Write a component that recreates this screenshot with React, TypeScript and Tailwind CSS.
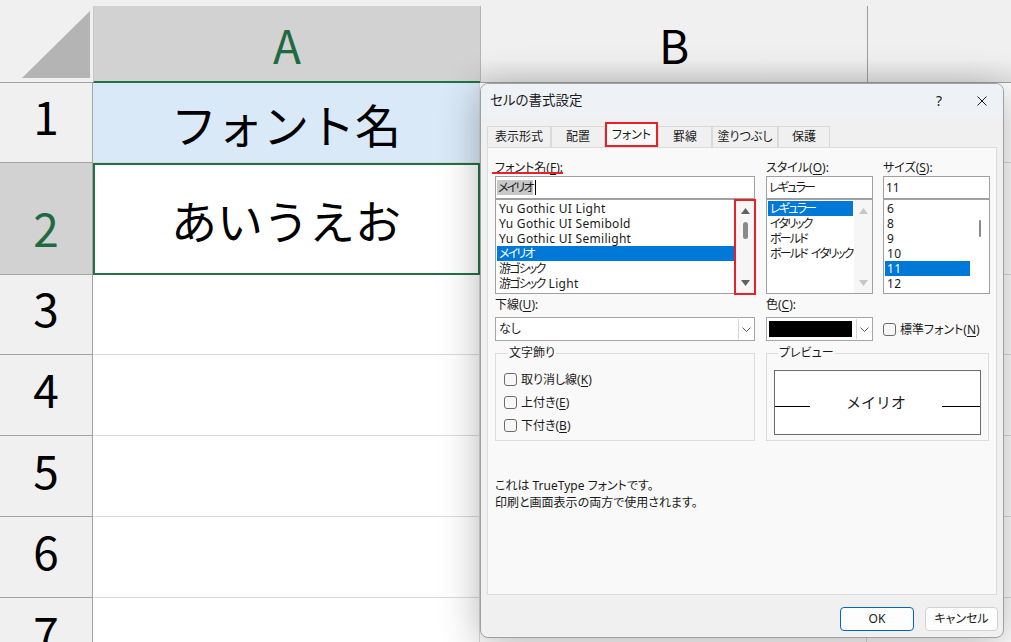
import type { ReactNode } from "react";

const sheetRows = [
  { n: "1", height: "h-[80px]", text: "フォント名", fill: "bg-[#dae9f8]" },
  { n: "2", height: "h-[112px]", text: "あいうえお", selected: true },
  { n: "3", height: "h-[80px]" },
  { n: "4", height: "h-[81px]" },
  { n: "5", height: "h-[81px]" },
  { n: "6", height: "h-[81px]" },
  { n: "7", height: "h-[81px]" },
];

const tabs = [
  { label: "表示形式", width: "w-[64px]" },
  { label: "配置", width: "w-[54px]" },
  { label: "フォント", width: "w-[53px]", active: true },
  { label: "罫線", width: "w-[54px]" },
  { label: "塗りつぶし", width: "w-[66px]" },
  { label: "保護", width: "w-[52px]" },
];

const fontNames = [
  "Yu Gothic UI Light",
  "Yu Gothic UI Semibold",
  "Yu Gothic UI Semilight",
  "メイリオ",
  "游ゴシック",
  "游ゴシック Light",
];
const fontStyles = ["レギュラー", "イタリック", "ボールド", "ボールド イタリック"];
const fontSizes = ["6", "8", "9", "10", "11", "12"];

// Yu Gothic UI has narrow kana: squeeze Japanese words, keep latin ones a touch wide
const hasKana = (text: string) => /[^\x00-\x7F]/.test(text);

function ItemText({ text }: { text: string }) {
  if (!hasKana(text)) return <span className="tracking-[0.3px]">{text}</span>;
  return (
    <span className="inline-flex gap-[4px]">
      {text.split(" ").map((word) => (
        <span key={word} className={hasKana(word) ? "tracking-[-1.8px]" : "tracking-[0.3px]"}>
          {word}
        </span>
      ))}
    </span>
  );
}

function Key({ children }: { children: ReactNode }) {
  return <span className="underline underline-offset-[2px]">{children}</span>;
}

function Label({ children }: { children: ReactNode }) {
  return <div className="h-[17px] whitespace-nowrap leading-[17px]">{children}</div>;
}

function Arrow({ up, color }: { up?: boolean; color: string }) {
  return (
    <svg width="9" height="6" viewBox="0 0 9 6">
      <polygon points={up ? "0,6 4.5,0 9,6" : "0,0 9,0 4.5,6"} fill={color} />
    </svg>
  );
}

function Chevron() {
  return (
    <svg width="9" height="5" viewBox="0 0 9 5">
      <polyline points="0.5,0.5 4.5,4.5 8.5,0.5" fill="none" stroke="#606060" strokeWidth="1" />
    </svg>
  );
}

function ListItems({ items, selected }: { items: string[]; selected: number }) {
  return (
    <div className="min-w-0 flex-1 overflow-hidden px-px pt-px">
      {items.map((item, i) => (
        <div
          key={item}
          className={`h-[15px] whitespace-nowrap pl-[2px] leading-[15px] ${i === selected ? "bg-[#0078d7] text-white" : ""}`}
        >
          <ItemText text={item} />
        </div>
      ))}
    </div>
  );
}

function Checkbox({ children }: { children: ReactNode }) {
  return (
    <div className="flex h-[23px] items-center gap-[4px]">
      <div className="h-[13px] w-[13px] rounded-[3px] border border-[#6b6b6b] bg-[#f7f7f7]" />
      <span className="whitespace-nowrap leading-[17px]">{children}</span>
    </div>
  );
}

function SheetRow({ row }: { row: (typeof sheetRows)[number] }) {
  return (
    <div className={`flex shrink-0 ${row.height}`}>
      <div
        className={`flex w-[93px] shrink-0 items-end justify-center border-b border-r border-[#a3a3a3] pb-[24px] text-[46px] leading-none ${row.selected ? "bg-[#d2d2d2] text-[#1e6b41]" : "bg-[#f0f0f0] text-black"}`}
      >
        {row.n}
      </div>
      <div
        className={`flex w-[387px] shrink-0 items-center justify-center border-b border-r text-[46px] leading-none text-black ${row.fill ?? "bg-white"} ${row.selected ? "border-[#217346] shadow-[inset_2px_2px_0_#217346,inset_-1px_-1px_0_#217346]" : "border-[#dadada]"}`}
      >
        {row.text}
      </div>
      <div className="w-[387px] shrink-0 border-b border-r border-[#dadada] bg-white" />
      <div className="flex-1 border-b border-[#dadada] bg-white" />
    </div>
  );
}

function FormatDialog() {
  return (
    <div className="absolute left-[480px] top-[83px] flex h-[555px] w-[524px] flex-col overflow-hidden rounded-[8px] border border-[#a0a0a0] bg-[#f0f0f0] font-['Noto_Sans','Noto_Sans_CJK_JP',sans-serif] text-[12px] text-[#1a1a1a] shadow-[0_6px_40px_rgba(0,0,0,0.3)] [font-feature-settings:'palt']">
      {/* title bar */}
      <div className="flex h-[33px] shrink-0 items-center bg-[#eef2f6] pl-[9px] pr-[16px]">
        <span className="text-[13.5px]">セルの書式設定</span>
        <span className="ml-auto mr-[35px] text-[14px]">?</span>
        <svg width="10" height="10" viewBox="0 0 10 10">
          <path d="M0.5 0.5 L9.5 9.5 M9.5 0.5 L0.5 9.5" stroke="#1a1a1a" strokeWidth="1" />
        </svg>
      </div>

      {/* tabs */}
      <div className="flex h-[30px] shrink-0 items-end pl-[6px]">
        {tabs.map((tab) => (
          <div
            key={tab.label}
            className={`flex shrink-0 items-center justify-center whitespace-nowrap ${tab.width} ${tab.active ? "h-[25px] border-2 border-[#e8202a] bg-[#f9f9f9]" : "h-[21px] border-x border-t border-[#d9d9d9] bg-[#f0f0f0]"}`}
          >
            {tab.label}
          </div>
        ))}
      </div>

      {/* panel */}
      <div className="mx-[6px] h-[448px] shrink-0 border border-[#dcdcdc] bg-[#f9f9f9] pl-[7px] pt-[11px]">
        <div className="flex">
          <div className="w-[260px]">
            <div className="relative">
              <Label>
                フォント名(<Key>F</Key>):
              </Label>
              <span className="absolute left-[-3px] top-[13px] h-[2px] w-[71px] bg-[#e8202a]" />
            </div>
            <div className="flex h-[23px] items-center border border-[#a0a0a0] bg-white pl-[1px]">
              <span className="bg-[#c8c8c8] pl-px leading-[15px] tracking-[-1.8px]">メイリオ</span>
              <span className="ml-[2px] h-[15px] w-px bg-black" />
            </div>
            <div className="relative flex h-[95px] border border-[#a0a0a0] bg-white">
              <ListItems items={fontNames} selected={3} />
              <div className="flex w-[18px] flex-col items-center bg-[#f6f6f6] pb-[7px] pt-[8px]">
                <Arrow up color="#606060" />
                <div className="mt-[8px] h-[17px] w-[5px] rounded-full bg-[#8a8a8a]" />
                <div className="mt-auto">
                  <Arrow color="#606060" />
                </div>
              </div>
              <div className="absolute right-[-2px] top-[-1px] h-[96px] w-[22px] border-2 border-[#e8202a]" />
            </div>
          </div>

          <div className="ml-[11px] w-[107px]">
            <Label>
              スタイル(<Key>O</Key>):
            </Label>
            <div className="flex h-[23px] items-center border border-[#a0a0a0] bg-white pl-[2px] tracking-[-1.8px]">
              レギュラー
            </div>
            <div className="flex h-[95px] border border-[#a0a0a0] bg-white">
              <ListItems items={fontStyles} selected={0} />
              <div className="flex w-[18px] flex-col items-center bg-[#f6f6f6] pb-[7px] pt-[8px]">
                <Arrow up color="#c6c6c6" />
                <div className="mt-auto">
                  <Arrow color="#c6c6c6" />
                </div>
              </div>
            </div>
          </div>

          <div className="ml-[10px] w-[107px]">
            <Label>
              サイズ(<Key>S</Key>):
            </Label>
            <div className="flex h-[23px] items-center border border-[#a0a0a0] bg-white pl-[2px]">11</div>
            <div className="flex h-[95px] border border-[#a0a0a0] bg-white">
              <ListItems items={fontSizes} selected={4} />
              <div className="flex w-[18px] justify-center pt-[20px]">
                <div className="h-[17px] w-[2px] rounded-full bg-[#8a8a8a]" />
              </div>
            </div>
          </div>
        </div>

        <div className="mt-[2px] flex">
          <div className="w-[260px]">
            <Label>
              下線(<Key>U</Key>):
            </Label>
            <div className="mt-[4px] flex h-[24px] border border-[#a6a6a6] bg-white">
              <div className="flex flex-1 items-center pl-[3px]">なし</div>
              <div className="m-px flex w-[15px] items-center justify-center border-l border-[#d6d6d6]">
                <Chevron />
              </div>
            </div>
          </div>
          <div className="ml-[11px] w-[107px]">
            <Label>
              色(<Key>C</Key>):
            </Label>
            <div className="mt-[4px] flex h-[24px] border border-[#a6a6a6] bg-white">
              <div className="my-[3px] ml-[2px] w-[83px] bg-black" />
              <div className="flex-1" />
              <div className="m-px flex w-[15px] items-center justify-center border-l border-[#d6d6d6]">
                <Chevron />
              </div>
            </div>
          </div>
          <div className="ml-[10px] w-[107px]">
            <div className="h-[17px]" />
            <div className="mt-[4px] flex h-[24px] items-center">
              <Checkbox>
                標準フォント(<Key>N</Key>)
              </Checkbox>
            </div>
          </div>
        </div>

        <div className="mt-[4px] flex">
          <fieldset className="h-[96px] w-[260px] border border-[#dcdcdc] pl-[8px]">
            <legend className="ml-[4px] px-px leading-[16px]">文字飾り</legend>
            <div className="pt-[7px]">
              <Checkbox>
                取り消し線(<Key>K</Key>)
              </Checkbox>
              <Checkbox>
                上付き(<Key>E</Key>)
              </Checkbox>
              <Checkbox>
                下付き(<Key>B</Key>)
              </Checkbox>
            </div>
          </fieldset>
          <fieldset className="ml-[11px] h-[96px] w-[223px] border border-[#dcdcdc] px-[7px]">
            <legend className="ml-[4px] px-px leading-[16px]">プレビュー</legend>
            <div className="mt-[9px] flex h-[65px] border border-[#6b6b6b] bg-white pt-[22px]">
              <div className="h-[14px] w-[35px] border-b border-black" />
              <div className="flex-1 text-center text-[15px] leading-[18px] [font-feature-settings:normal]">メイリオ</div>
              <div className="h-[14px] w-[38px] border-b border-black" />
            </div>
          </fieldset>
        </div>

        <div className="mt-[36px] leading-[17px]">
          <div>これは TrueType フォントです。</div>
          <div>印刷と画面表示の両方で使用されます。</div>
        </div>
      </div>

      {/* buttons */}
      <div className="mt-[12px] flex justify-end gap-[11px] pr-[5px]">
        <button className="h-[24px] w-[74px] rounded-[4px] border border-[#0067c0] bg-[#fdfdfd] text-[12px]">OK</button>
        <button className="h-[24px] w-[73px] rounded-[4px] border border-[#d1d1d1] bg-[#fdfdfd] text-[12px]">キャンセル</button>
      </div>
    </div>
  );
}

export default function App() {
  return (
    <div className="relative flex h-[642px] w-[1011px] flex-col overflow-hidden bg-white font-['Noto_Sans_CJK_JP','Noto_Sans',sans-serif]">
      {/* column headers */}
      <div className="flex h-[83px] shrink-0 bg-[#f0f0f0]">
        <div className="w-[93px] shrink-0 border-b border-[#a3a3a3]">
          <svg width="93" height="82" viewBox="0 0 93 82">
            <polygon points="22,78 90,11 90,78" fill="#b4b4b4" />
          </svg>
        </div>
        <div className="mt-[6px] flex w-[387px] shrink-0 items-center justify-center border-b-2 border-l border-b-[#217346] border-l-[#c8c8c8] bg-[#d2d2d2] text-[46px] leading-none text-[#1e6b41]">
          A
        </div>
        <div className="mt-[6px] flex w-[387px] shrink-0 items-center justify-center border-b border-l border-b-[#a0a0a0] border-l-[#b4b4b4] bg-[linear-gradient(#f0f0f0_70%,#e2e2e2)] text-[46px] leading-none text-black">
          B
        </div>
        <div className="mt-[6px] flex-1 border-b border-l border-b-[#a0a0a0] border-l-[#9c9c9c] bg-[linear-gradient(#f0f0f0_70%,#e2e2e2)]" />
      </div>

      {sheetRows.map((row) => (
        <SheetRow key={row.n} row={row} />
      ))}

      <FormatDialog />
    </div>
  );
}
